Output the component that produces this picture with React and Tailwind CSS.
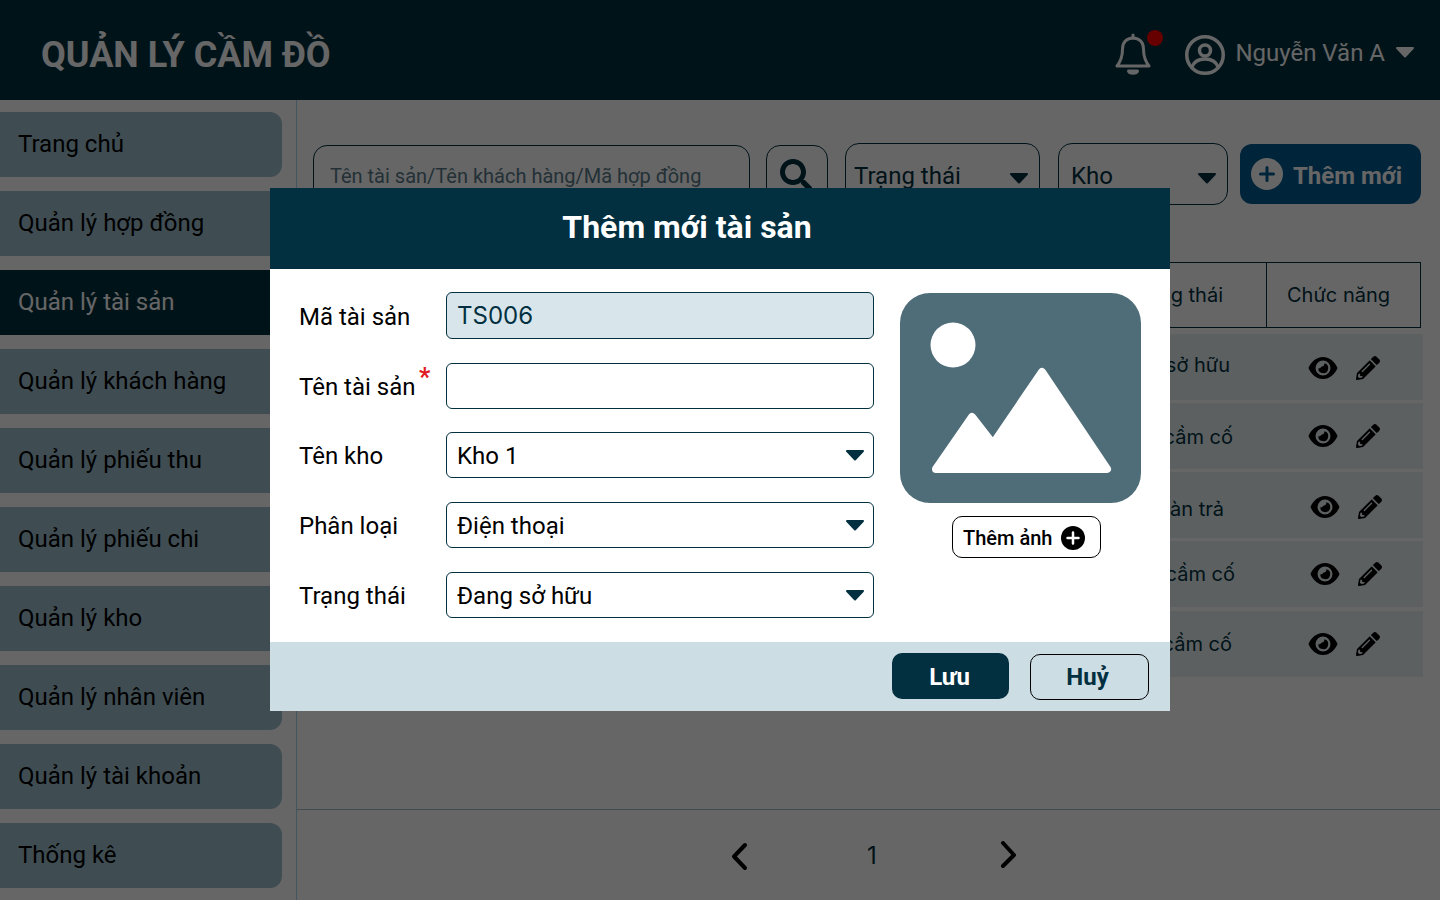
import React from 'react';
import { FaSearch, FaPencilAlt } from 'react-icons/fa';

const navItems = [
  'Trang chủ',
  'Quản lý hợp đồng',
  'Quản lý tài sản',
  'Quản lý khách hàng',
  'Quản lý phiếu thu',
  'Quản lý phiếu chi',
  'Quản lý kho',
  'Quản lý nhân viên',
  'Quản lý tài khoản',
  'Thống kê',
];

const rows = [
  { status: 'Đang sở hữu', box: '', text: 'pr-[8px] mb-[4px]', icons: 'mt-[2px]' },
  { status: 'Đang cầm cố', box: '', text: 'pr-[5px] mt-[2px]', icons: '' },
  { status: 'Đã hoàn trả', box: '', text: 'pr-[14px] mt-[8px]', icons: 'ml-[2px] mt-[4px]' },
  { status: 'Đang cầm cố', box: '', text: 'pr-[3px]', icons: 'ml-[2px]' },
  { status: 'Đang cầm cố', box: 'mt-[1px]', text: 'pr-[6px]', icons: '' },
];

const Caret = ({ className }) => (
  <svg viewBox="0 0 20 12" className={className} fill="currentColor" stroke="currentColor" strokeWidth="2" strokeLinejoin="round">
    <path d="M2 2h16l-8 8.500z" />
  </svg>
);

const Eye = () => (
  <svg viewBox="0 0 30 24" className="w-[30px] h-[24px] text-black" fill="currentColor">
    <path
      fillRule="evenodd"
      d="M15 1C8 1 3 6 .5 12 3 18 8 23 15 23s12-5 14.500-11C27 6 22 1 15 1zm0 3.500a7.500 7.500 0 1 1 0 15 7.500 7.500 0 0 1 0-15z"
    />
    <path d="M16.500 7.300a5 5 0 1 1-6.300 5.200 3.600 3.600 0 0 0 3.300-1.700 3.600 3.600 0 0 0 3-3.500z" />
  </svg>
);

const FormSelect = ({ value }) => (
  <div className="h-full border border-[#023040] rounded-[6px] pl-[10px] pr-[8px] flex items-center justify-between bg-white text-[24px] text-black">
    <span className="pt-[2px]">{value}</span>
    <Caret className="w-[20px] h-[12px] text-[#023040]" />
  </div>
);

const FormRow = ({ label, required, className, children }) => (
  <div className={`flex items-center ${className}`}>
    <div className="w-[147px] pt-[2px] text-[24px] text-black relative">
      {label}
      {required && <span className="absolute left-[120px] top-[-4px] text-[25px] leading-[30px] font-bold text-[#e01b24]">*</span>}
    </div>
    <div className="w-[428px] h-full">{children}</div>
  </div>
);

const App = () => {
  return (
    <div className="relative w-[1440px] h-[900px] overflow-hidden bg-white font-['Roboto',sans-serif]">
      {/* Page behind the dialog */}
      <header className="h-[100px] bg-[#023040] flex items-center justify-between pl-[41px] pr-[25px] pt-[9px]">
        <h1 className="text-[36px] font-bold text-white leading-none">QUẢN LÝ CẦM ĐỒ</h1>
        <div className="flex items-center">
          <div className="relative w-[48px] h-[50px] mr-[22px]">
            <svg viewBox="0 0 36 42" className="absolute left-0 top-[3px] w-[36px] h-[42px] text-white" fill="none" stroke="currentColor" strokeWidth="3" strokeLinejoin="round" strokeLinecap="round">
              <path d="M18 5c-6.500 0-10.500 4.500-10.500 11 0 8-1.500 12-5.500 17h32c-4-5-5.500-9-5.500-17 0-6.500-4-11-10.500-11z" />
              <path d="M18 2v3" />
              <path d="M13.500 38h9c-1 3-8 3-9 0z" fill="currentColor" />
            </svg>
            <span className="absolute left-[32px] top-0 w-[16px] h-[16px] rounded-full bg-[#ff0000]"></span>
          </div>
          <svg viewBox="0 0 40 40" className="w-[40px] h-[40px] text-white" fill="none" stroke="currentColor" strokeWidth="3.500">
            <circle cx="20" cy="20" r="18.250" />
            <circle cx="20" cy="15.500" r="5.500" />
            <path d="M7 32c2-5.500 7-8 13-8s11 2.500 13 8" />
          </svg>
          <span className="ml-[10px] mb-[4px] text-[24px] text-white">Nguyễn Văn A</span>
          <Caret className="ml-[10px] mb-[6px] w-[20px] h-[12px] text-white" />
        </div>
      </header>

      <div className="flex h-[800px]">
        <aside className="w-[297px] shrink-0 border-r border-[#a8d4e8] pt-[12px] flex flex-col gap-[14px]">
          {navItems.map((item) => (
            <div
              key={item}
              className={`w-[282px] h-[65px] shrink-0 rounded-r-[12px] pl-[18px] pb-[2px] flex items-center text-[24px] ${
                item === 'Quản lý tài sản' ? 'bg-[#023040] text-white' : 'bg-[#9dc0cf] text-black'
              }`}
            >
              {item}
            </div>
          ))}
        </aside>

        <main className="flex-1 min-w-0 flex flex-col bg-white">
          <div className="flex-1 pl-[16px] pr-[19px] pt-[43px]">
            <div className="flex items-start">
              <div className="w-[437px] h-[60px] mt-[2px] border border-[#023040] rounded-[14px] pl-[16px] pt-[2px] flex items-center text-[20px] text-[#577a8a]">
                Tên tài sản/Tên khách hàng/Mã hợp đồng
              </div>
              <div className="ml-[16px] mt-[2px] w-[62px] h-[60px] border border-[#023040] rounded-[14px] pr-[3px] flex items-center justify-center text-[#023040]">
                <FaSearch className="w-[32px] h-[32px]" />
              </div>
              <div className="ml-[17px] w-[195px] h-[62px] border border-[#023040] rounded-[14px] pl-[8px] pr-[10px] flex items-center justify-between text-[24px] text-[#023040]">
                <span className="pt-[3px]">Trạng thái</span>
                <Caret className="w-[20px] h-[12px] mt-[7px]" />
              </div>
              <div className="ml-[18px] w-[170px] h-[62px] border border-[#023040] rounded-[14px] pl-[12px] pr-[10px] flex items-center justify-between text-[24px] text-[#023040]">
                <span className="pt-[3px]">Kho</span>
                <Caret className="w-[20px] h-[12px] mt-[7px]" />
              </div>
              <button className="ml-[12px] mt-[1px] w-[181px] h-[60px] rounded-[12px] bg-[#025a91] pl-[11px] flex items-center text-[24px] font-bold text-white">
                <svg viewBox="0 0 32 32" className="w-[32px] h-[32px]">
                  <circle cx="16" cy="16" r="16" fill="#fff" />
                  <path d="M16 9.500v13M9.500 16h13" stroke="#025a91" strokeWidth="3" strokeLinecap="round" />
                </svg>
                <span className="ml-[10px] pt-[3px]">Thêm mới</span>
              </button>
            </div>

            <div className="mt-[57px] flex h-[66px] border border-[#023040] font-['Inter',sans-serif] text-[20px] text-[#023040]">
              <div className="flex-1 flex items-center justify-end pr-[43px]">Trạng thái</div>
              <div className="w-[154px] border-l border-[#023040] flex items-center pl-[20px]">Chức năng</div>
            </div>

            <div className="mt-[6px] w-[1110px] flex flex-col gap-[3px] font-['Inter',sans-serif] text-[20px] text-[#023040]">
              {rows.map((row, i) => (
                <div key={i} className={`h-[66px] bg-[#e6f0f2] flex items-center ${row.box}`}>
                  <div className={`flex-1 text-right ${row.text}`}>{row.status}</div>
                  <div className="w-[185px] pl-[70px]">
                    <div className={`flex items-center gap-[18px] ${row.icons}`}>
                      <Eye />
                      <FaPencilAlt className="w-[24px] h-[24px] text-black" />
                    </div>
                  </div>
                </div>
              ))}
            </div>
          </div>

          <div className="h-[91px] border-t border-[#9dc0cf] flex items-center pl-[432px] pt-[2px]">
            <svg viewBox="0 0 20 30" className="mt-[1px] w-[20px] h-[30px] text-black" fill="none" stroke="currentColor" strokeWidth="4" strokeLinecap="round" strokeLinejoin="round">
              <path d="M16 3L5 14.500 16 26" />
            </svg>
            <span className="ml-[118px] text-[24px] font-['Inter',sans-serif] text-[#023040]">1</span>
            <svg viewBox="0 0 20 30" className="ml-[122px] w-[20px] h-[30px] text-black" fill="none" stroke="currentColor" strokeWidth="4" strokeLinecap="round" strokeLinejoin="round">
              <path d="M4 2l11 12L4 25" />
            </svg>
          </div>
        </main>
      </div>

      {/* Dim layer and dialog */}
      <div className="absolute inset-0 bg-black/60 pl-[270px] pt-[188px]">
        <div className="w-[900px]">
          <div className="h-[81px] bg-[#023040] flex items-center justify-center pr-[66px] pb-[4px] text-[32px] font-bold text-white">
            <span>Thêm mới tài sản</span>
          </div>

          <div className="h-[373px] bg-white flex pl-[29px] pt-[23px]">
            <div className="flex flex-col gap-[24px]">
              <FormRow label="Mã tài sản" className="h-[47px]">
                <div className="h-full border border-[#023040] rounded-[6px] bg-[#d8e5eb] pl-[10px] pt-[1px] flex items-center font-['Inter',sans-serif] text-[24px] text-[#023040]">TS006</div>
              </FormRow>
              <FormRow label="Tên tài sản" required className="h-[46px]">
                <div className="h-full border border-[#023040] rounded-[6px] bg-white"></div>
              </FormRow>
              <FormRow label="Tên kho" className="h-[46px] -mt-[1px]">
                <FormSelect value="Kho 1" />
              </FormRow>
              <FormRow label="Phân loại" className="h-[46px]">
                <FormSelect value="Điện thoại" />
              </FormRow>
              <FormRow label="Trạng thái" className="h-[46px]">
                <FormSelect value="Đang sở hữu" />
              </FormRow>
            </div>

            <div className="ml-[26px] w-[241px] pt-[1px] flex flex-col items-start">
              <svg viewBox="0 0 241 210" className="w-[241px] h-[210px]">
                <rect width="241" height="210" rx="30" fill="#4f6d78" />
                <circle cx="53" cy="52" r="22.500" fill="#fff" />
                <path
                  d="M36 176L72 124 93 151 142 79 207 176z"
                  fill="#fff"
                  stroke="#fff"
                  strokeWidth="8"
                  strokeLinejoin="round"
                />
              </svg>
              <button className="mt-[13px] ml-[52px] w-[149px] h-[42px] border border-black rounded-[10px] pl-[10px] pt-[1px] flex items-center gap-[9px] text-[20px] font-medium text-black">
                <span className="pt-[1px]">Thêm ảnh</span>
                <svg viewBox="0 0 24 24" className="w-[24px] h-[24px]">
                  <circle cx="12" cy="12" r="12" fill="#000" />
                  <path d="M12 6.500v11M6.500 12h11" stroke="#fff" strokeWidth="2.500" strokeLinecap="round" />
                </svg>
              </button>
            </div>
          </div>

          <div className="h-[69px] bg-[#cddde4] flex items-start justify-end pr-[21px] pt-[11px]">
            <button className="w-[117px] h-[46px] rounded-[10px] bg-[#023040] pr-[2px] pt-[2px] text-[24px] font-bold text-white">Lưu</button>
            <button className="ml-[21px] mt-[1px] w-[119px] h-[46px] rounded-[10px] border border-black pr-[4px] text-[24px] font-bold text-[#023040]">Huỷ</button>
          </div>
        </div>
      </div>
    </div>
  );
};

export default App;
